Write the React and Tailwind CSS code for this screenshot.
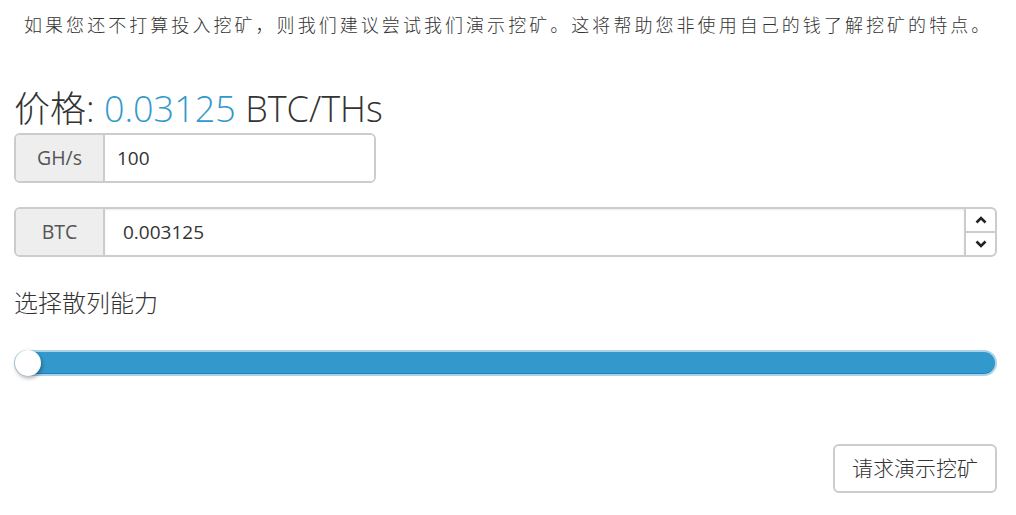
import React, { useState } from 'react';

const font = { fontFamily: '"Open Sans", "Noto Sans CJK SC", sans-serif' };

export default function App() {
  const [ghs, setGhs] = useState('100');
  const [btc, setBtc] = useState('0.003125');

  return (
    <div className="w-[1016px] h-[515px] bg-white text-[#333] pl-[14px] pr-[19px] pt-[10px]" style={font}>
      <p className="pl-[10px] text-[18px] leading-[30px] tracking-[3.05px] font-light text-[#333]">
        如果您还不打算投入挖矿，则我们建议尝试我们演示挖矿。这将帮助您非使用自己的钱了解挖矿的特点。
      </p>

      <h2 className="mt-[47px] text-[36px] leading-[44px] font-light text-[#333]">
        价格: <span className="text-[#3399cc]">0.03125</span> BTC/THs
      </h2>

      <div className="mt-[2px] flex w-[362px] h-[50px] rounded-[6px] border-2 border-[#ccc] overflow-hidden">
        <div className="w-[89px] bg-[#eee] border-r-2 border-[#ccc] flex items-center justify-center text-[19.5px] text-[#555]">
          GH/s
        </div>
        <input
          value={ghs}
          onChange={(e) => setGhs(e.target.value)}
          className="flex-1 px-[12px] text-[19px] text-[#333] outline-none bg-white"
        />
      </div>

      <div className="mt-[24px] flex w-[983px] h-[50px] rounded-[6px] border-2 border-[#ccc] overflow-hidden">
        <div className="w-[89px] bg-[#eee] border-r-2 border-[#ccc] flex items-center justify-center text-[19.5px] text-[#555]">
          BTC
        </div>
        <input
          value={btc}
          onChange={(e) => setBtc(e.target.value)}
          className="flex-1 px-[18px] text-[19px] text-[#333] outline-none bg-white shadow-[inset_0_1px_2px_rgba(0,0,0,0.08)]"
        />
        <div className="w-[31px] border-l-2 border-[#ccc] flex flex-col">
          <button className="flex-1 flex items-center justify-center border-b-2 border-[#ccc]">
            <svg width="12" height="8" viewBox="0 0 12 8"><path d="M1.5 6.5 L6 2 L10.5 6.5" fill="none" stroke="#222" strokeWidth="2.6" /></svg>
          </button>
          <button className="flex-1 flex items-center justify-center">
            <svg width="12" height="8" viewBox="0 0 12 8"><path d="M1.5 1.5 L6 6 L10.5 1.5" fill="none" stroke="#222" strokeWidth="2.6" /></svg>
          </button>
        </div>
      </div>

      <p className="mt-[30px] text-[24px] leading-[32px] font-light text-[#333]">选择散列能力</p>

      <div className="relative mt-[31px] w-[983px] h-[26px] rounded-full bg-[#3399cc] border-2 border-[#a9d3ea] shadow-[inset_0_-1px_0_rgba(0,90,150,0.35)]">
        <div className="absolute left-[-1px] top-[-2px] w-[26px] h-[26px] rounded-full bg-white shadow-[1px_2px_4px_rgba(0,0,0,0.35)]" />
      </div>

      <div className="flex justify-end mt-[68px]">
        <button className="w-[164px] h-[49px] rounded-[6px] border-2 border-[#ccc] bg-white text-[21px] font-light text-[#333]">
          请求演示挖矿
        </button>
      </div>
    </div>
  );
}
